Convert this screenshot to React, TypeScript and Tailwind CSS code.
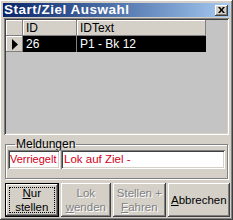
import React from "react";

const raised =
  "shadow-[inset_-1px_-1px_0_#404040,inset_1px_1px_0_#ffffff,inset_-2px_-2px_0_#808080,inset_2px_2px_0_#d4d0c8]";
const sunken =
  "shadow-[inset_1px_1px_0_#808080,inset_-1px_-1px_0_#ffffff,inset_2px_2px_0_#404040,inset_-2px_-2px_0_#d4d0c8]";
const cellRaised = "shadow-[inset_-1px_-1px_0_#808080,inset_1px_1px_0_#ffffff]";

function Btn({
  lines,
  disabled,
  isDefault,
  className,
}: {
  lines: React.ReactNode[];
  disabled?: boolean;
  isDefault?: boolean;
  className: string;
}) {
  return (
    <div
      className={`relative flex flex-col items-center justify-center leading-[14px] bg-[#d4d0c8] ${
        isDefault ? "border border-black" : ""
      } ${className}`}
    >
      <div className={`absolute inset-0 ${raised}`} />
      {isDefault && (
        <div className="absolute inset-[3px] border border-dotted border-black" />
      )}
      {lines.map((l, i) => (
        <span
          key={i}
          className={
            disabled
              ? "text-[#808080] [text-shadow:1px_1px_0_#ffffff]"
              : "text-black"
          }
        >
          {l}
        </span>
      ))}
    </div>
  );
}

export default function App() {
  return (
    <div
      className={`w-[233px] h-[220px] bg-[#d4d0c8] p-[3px] flex flex-col text-[11.5px] text-black font-['Liberation_Sans',Arial,sans-serif] ${raised}`}
    >
      {/* title bar */}
      <div className="h-[14px] flex items-center justify-between pl-[1px] pr-[2px] bg-gradient-to-r from-[#0a246a] to-[#a6caf0]">
        <span className="text-white font-bold text-[13.5px] leading-none whitespace-nowrap tracking-[0.5px]">
          Start/Ziel Auswahl
        </span>
        <div
          className={`w-[13px] h-[11px] bg-[#d4d0c8] flex items-center justify-center ${raised}`}
        >
          <svg width="7" height="6" viewBox="0 0 7 6">
            <path d="M0 0h2l1.5 2L5 0h2L4.5 3 7 6H5L3.5 4 2 6H0l2.5-3z" fill="#000" />
          </svg>
        </div>
      </div>

      {/* grid */}
      <div
        className={`mt-[1px] mx-[1px] h-[117px] bg-[#c4c4c4] p-[2px] ${sunken}`}
      >
        <div className="flex h-[16px] text-[12px]">
          <div className={`w-[17px] bg-[#d4d0c8] ${cellRaised}`} />
          <div className={`w-[54px] bg-[#d4d0c8] pl-[3px] leading-[16px] ${cellRaised}`}>
            ID
          </div>
          <div className={`w-[129px] bg-[#d4d0c8] pl-[3px] leading-[16px] ${cellRaised}`}>
            IDText
          </div>
        </div>
        <div className="flex h-[16px] text-[12px]">
          <div
            className={`w-[17px] bg-[#d4d0c8] flex items-center justify-center ${cellRaised}`}
          >
            <svg width="6" height="11" viewBox="0 0 6 11">
              <path d="M0 0l6 5.5L0 11z" fill="#000" />
            </svg>
          </div>
          <div className="w-[54px] bg-black text-white pl-[3px] leading-[16px] border-r border-[#808080]">
            26
          </div>
          <div className="w-[129px] bg-black text-white pl-[3px] leading-[16px]">
            P1 - Bk 12
          </div>
        </div>
      </div>

      {/* Meldungen */}
      <fieldset className="mt-[3px] mx-[2px] h-[41px] border border-[#808080] shadow-[1px_1px_0_#ffffff,inset_1px_1px_0_#ffffff] px-[2px] pb-[3px] flex gap-[1px]">
        <legend className="ml-[7px] px-[1px] text-[12px] leading-[12px]">
          Meldungen
        </legend>
        <div
          className={`w-[52px] h-[19px] bg-white text-[#d00020] text-[11px] leading-[19px] pl-[2px] overflow-hidden whitespace-nowrap ${sunken}`}
        >
          Verriegelt
        </div>
        <div
          className={`flex-1 h-[19px] bg-white text-[#d00020] leading-[19px] pl-[3px] ${sunken}`}
        >
          Lok auf Ziel -
        </div>
      </fieldset>

      {/* buttons */}
      <div className="mt-[4px] ml-[2px] flex gap-[1px] h-[34px] text-[11.5px]">
        <Btn
          isDefault
          className="w-[54px]"
          lines={[
            <>
              <u>N</u>ur
            </>,
            "stellen",
          ]}
        />
        <Btn
          disabled
          className="w-[51px] ml-[1px]"
          lines={[
            "Lok",
            <>
              <u>w</u>enden
            </>,
          ]}
        />
        <Btn
          disabled
          className="w-[53px] ml-[1px]"
          lines={[
            "Stellen +",
            <>
              <u>F</u>ahren
            </>,
          ]}
        />
        <Btn
          className="w-[63px] ml-[1px]"
          lines={[
            <>
              <u>A</u>bbrechen
            </>,
          ]}
        />
      </div>
    </div>
  );
}
